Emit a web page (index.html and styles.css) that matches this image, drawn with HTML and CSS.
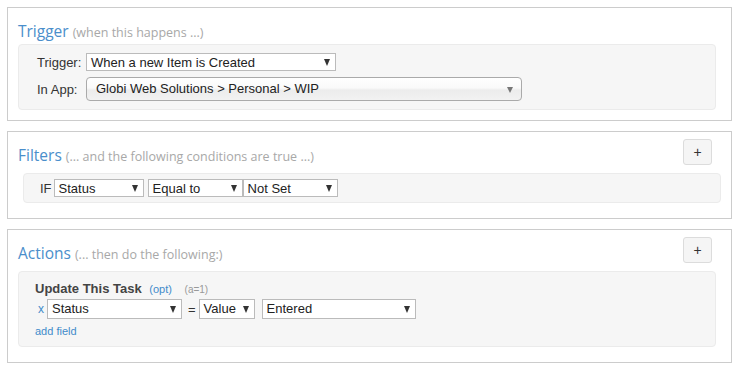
FILE: index.html
```html
<!DOCTYPE html>
<html lang="en">
<head>
    <meta charset="UTF-8">
    <title>Workflow rule</title>
    <link rel="stylesheet" href="styles.css">
</head>
<body>

    <div class="container">
        <!-- Trigger -->
        <section class="panel panel-trigger">
            <div class="panel-head">
                <h2 class="panel-title">Trigger <span class="panel-sub">(when this happens ...)</span></h2>
            </div>
            <div class="well trigger-well">
                <div class="field-row">
                    <label class="field-label">Trigger:</label>
                    <div class="select w-trigger"><span>When a new Item is Created</span><i class="arrow"></i></div>
                </div>
                <div class="field-row">
                    <label class="field-label">In App:</label>
                    <div class="select select-round w-app"><span>Globi Web Solutions &gt; Personal &gt; WIP</span><i class="arrow"></i></div>
                </div>
            </div>
        </section>

        <!-- Filters -->
        <section class="panel panel-filters">
            <div class="panel-head">
                <h2 class="panel-title">Filters <span class="panel-sub">(... and the following conditions are true ...)</span></h2>
                <button class="btn-add">+</button>
            </div>
            <div class="well filter-well">
                <span class="if-label">IF</span>
                <div class="select w-status"><span>Status</span><i class="arrow"></i></div>
                <div class="select w-op"><span>Equal to</span><i class="arrow"></i></div>
                <div class="select w-val"><span>Not Set</span><i class="arrow"></i></div>
            </div>
        </section>

        <!-- Actions -->
        <section class="panel panel-actions">
            <div class="panel-head">
                <h2 class="panel-title">Actions <span class="panel-sub">(... then do the following:)</span></h2>
                <button class="btn-add">+</button>
            </div>
            <div class="well action-well">
                <div class="task-title">Update This Task <a class="opt" href="#">(opt)</a> <span class="meta">(a=1)</span></div>
                <div class="action-row">
                    <a class="remove" href="#">x</a>
                    <div class="select tall w-field"><span>Status</span><i class="arrow"></i></div>
                    <span class="equals">=</span>
                    <div class="select tall w-value"><span>Value</span><i class="arrow"></i></div>
                    <div class="select tall w-entered"><span>Entered</span><i class="arrow"></i></div>
                </div>
                <a class="add-field" href="#">add field</a>
            </div>
        </section>
    </div>

</body>
</html>
```

FILE: styles.css
```css
/* Page */
body {
    margin: 0;
    background-color: #fff;
    font-family: 'Liberation Sans', Arial, sans-serif;
    font-size: 13px;
    color: #333;
}

.container {
    padding: 7px 0 0 7px;
    width: 725px;
}

/* Panels */
.panel {
    border: 1px solid #ccc;
    padding: 0 15px 15px 10px;
    margin-bottom: 10px;
}

.panel-trigger {
    padding-bottom: 10px;
}

.panel-head {
    display: flex;
    justify-content: space-between;
    align-items: flex-start;
    height: 34px;
}

.panel-title {
    margin: 0;
    padding-top: 12px;
    font-family: 'Open Sans', sans-serif;
    font-weight: 400;
    font-size: 15.5px;
    line-height: 22px;
    color: #4a8ecb;
}

.panel-sub {
    font-size: 12.5px;
    color: #a8a8a8;
}

.btn-add {
    margin: 7px 4px 0 0;
    width: 29px;
    height: 26px;
    padding: 0;
    background-color: #f5f5f5;
    border: 1px solid #dcdcdc;
    border-radius: 3px;
    font-family: 'Liberation Sans', Arial, sans-serif;
    font-size: 14px;
    color: #333;
}

/* Grey wells */
.well {
    box-sizing: border-box;
    width: 698px;
    background-color: #f6f6f6;
    border: 1px solid #ebebeb;
    border-radius: 4px;
    margin-top: 7px;
}

.trigger-well {
    margin-top: 2px;
    padding: 8px 18px;
}

.filter-well {
    margin-left: 5px;
    padding: 5px 16px;
    display: flex;
    align-items: center;
}

.action-well {
    padding: 9px 16px 8px;
}

/* Form rows */
.field-row {
    display: flex;
    align-items: center;
}

.field-row + .field-row {
    margin-top: 6px;
}

.field-label {
    width: 49px;
}

/* Fake selects */
.select {
    position: relative;
    box-sizing: border-box;
    height: 18px;
    line-height: 17px;
    padding-left: 4px;
    background-color: #fff;
    border: 1px solid #bbb;
    color: #222;
    white-space: nowrap;
}

.select .arrow {
    position: absolute;
    right: 5px;
    top: 5px;
    width: 0;
    height: 0;
    border-left: 3.5px solid transparent;
    border-right: 3.5px solid transparent;
    border-top: 7px solid #333;
}

.select-round {
    height: 24px;
    line-height: 22px;
    padding-left: 9px;
    border-color: #aaa;
    border-radius: 4px;
    background: linear-gradient(#fff 0%, #fafafa 45%, #ececec 55%, #f2f2f2 100%);
}

.select-round .arrow {
    right: 8px;
    top: 9px;
    border-left-width: 3.5px;
    border-right-width: 3.5px;
    border-top: 6px solid #777;
}

.select.tall {
    height: 20px;
    line-height: 18px;
}

.select.tall .arrow {
    top: 6px;
}

.w-trigger { width: 250px; }
.w-app { width: 436px; }
.w-status { width: 90px; margin-right: 4px; }
.w-op { width: 95px; }
.w-val { width: 95px; }
.w-field { width: 135px; }
.w-value { width: 56px; margin-right: 7px; }
.w-entered { width: 154px; }

.if-label {
    margin-right: 2px;
}

/* Actions */
.task-title {
    font-weight: 700;
    line-height: 16px;
    color: #444;
}

.task-title .opt {
    margin-left: 4px;
    font-weight: 400;
    font-size: 11px;
}

.task-title .meta {
    margin-left: 9px;
    font-weight: 400;
    font-size: 10px;
    color: #999;
}

a {
    color: #428bca;
    text-decoration: none;
}

.action-row {
    display: flex;
    align-items: center;
    margin-top: 1px;
}

.remove {
    margin: 0 3px 0 3px;
    font-size: 12px;
}

.equals {
    margin: 0 3px 0 6px;
}

.add-field {
    display: block;
    margin-top: 5px;
    font-size: 11px;
    line-height: 14px;
}
```
